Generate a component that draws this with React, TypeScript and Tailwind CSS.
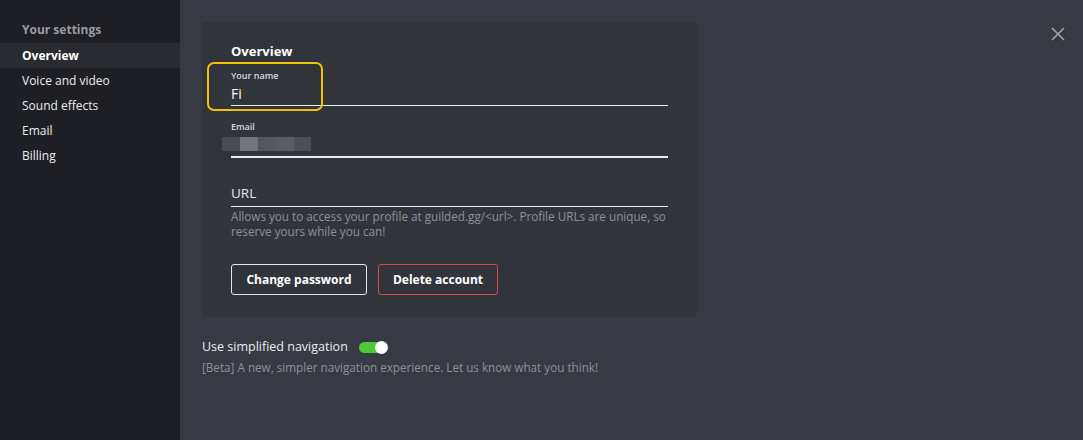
import React from "react";

export default function App() {
  return (
    <div
      className="flex h-[440px] w-[1083px] bg-[#373943] text-white overflow-hidden"
      style={{ fontFamily: '"Open Sans", "Liberation Sans", sans-serif' }}
    >
      {/* Sidebar */}
      <div className="w-[180px] shrink-0 bg-[#1e1f24] pt-[20px]">
        <div className="px-[22px] h-[20px] text-[12px] font-bold text-[#9a9ba3] leading-[20px]">Your settings</div>
        <div className="mt-[3px] flex flex-col">
          <div className="h-[25px] bg-[#292b31] px-[22px] text-[12px] font-bold leading-[25px]">Overview</div>
          <div className="h-[25px] px-[22px] text-[12px] leading-[25px] text-[#ececee]">Voice and video</div>
          <div className="h-[25px] px-[22px] text-[12px] leading-[25px] text-[#ececee]">Sound effects</div>
          <div className="h-[25px] px-[22px] text-[12px] leading-[25px] text-[#ececee]">Email</div>
          <div className="h-[25px] px-[22px] text-[12px] leading-[25px] text-[#ececee]">Billing</div>
        </div>
      </div>

      {/* Main */}
      <div className="relative flex-1 pl-[22px] pt-[22px]">
        <button className="absolute right-[18px] top-[27px] text-[#a2a3ab]">
          <svg width="14" height="14" viewBox="0 0 14 14" fill="none" stroke="currentColor" strokeWidth="1.6">
            <path d="M1 1 L13 13 M13 1 L1 13" />
          </svg>
        </button>

        <div className="w-[495px] rounded-[4px] bg-[#32343c] pl-[29px] pr-[29px] pt-[20px] pb-[22px]">
          <div className="text-[13px] font-bold leading-[18px]">Overview</div>

          {/* Your name */}
          <div className="relative mt-[4px]">
            <div className="absolute left-[-24px] top-[-2px] h-[49px] w-[116px] rounded-[7px] border-2 border-[#f2c200]" />
            <div className="pt-[6px] text-[9px] font-semibold leading-[12px] text-[#d6d7dc]">Your name</div>
            <div className="pt-[3px] pb-[1.5px] text-[14px] leading-[18px]">Fi</div>
            <div className="h-[1.5px] bg-[#e9e9ec]" />
          </div>

          {/* Email */}
          <div className="mt-[15px]">
            <div className="text-[9px] font-semibold leading-[12px] text-[#d6d7dc]">Email</div>
            <div className="ml-[-9px] mt-[4px] flex h-[14px]">
              <div className="w-[18px] bg-[#4a4c55]" />
              <div className="w-[18px] bg-[#74747c]" />
              <div className="w-[18px] bg-[#55575f]" />
              <div className="w-[18px] bg-[#5b5b63]" />
              <div className="w-[17px] bg-[#4d4f57]" />
            </div>
            <div className="mt-[5px] h-[1.5px] bg-[#e9e9ec]" />
          </div>

          {/* URL */}
          <div className="mt-[26px]">
            <div className="text-[13.5px] leading-[18px] text-[#e6e6e9]">URL</div>
            <div className="mt-[4px] h-[1.5px] bg-[#e9e9ec]" />
            <div className="mt-[2px] text-[11.7px] leading-[15px] text-[#8e9099]">
              Allows you to access your profile at guilded.gg/&lt;url&gt;. Profile URLs are unique, so reserve yours while you can!
            </div>
          </div>

          <div className="mt-[25px] flex gap-[11px]">
            <button className="h-[31px] w-[136px] rounded-[3px] border border-[#e6e6e9] text-[12px] font-bold">
              Change password
            </button>
            <button className="h-[31px] w-[120px] rounded-[3px] border border-[#d34a4a] text-[12px] font-bold">
              Delete account
            </button>
          </div>
        </div>

        <div className="mt-[21px] flex items-center gap-[11px]">
          <span className="text-[12.5px] leading-[18px] text-[#ececee]">Use simplified navigation</span>
          <div className="relative h-[13px] w-[29px]">
            <div className="absolute left-0 top-[1px] h-[11px] w-[26px] rounded-full bg-[#4ec73a]" />
            <div className="absolute right-0 top-0 h-[13px] w-[13px] rounded-full bg-white" />
          </div>
        </div>
        <div className="mt-[3px] text-[11.7px] leading-[16px] text-[#8e9099]">
          [Beta] A new, simpler navigation experience. Let us know what you think!
        </div>
      </div>
    </div>
  );
}
